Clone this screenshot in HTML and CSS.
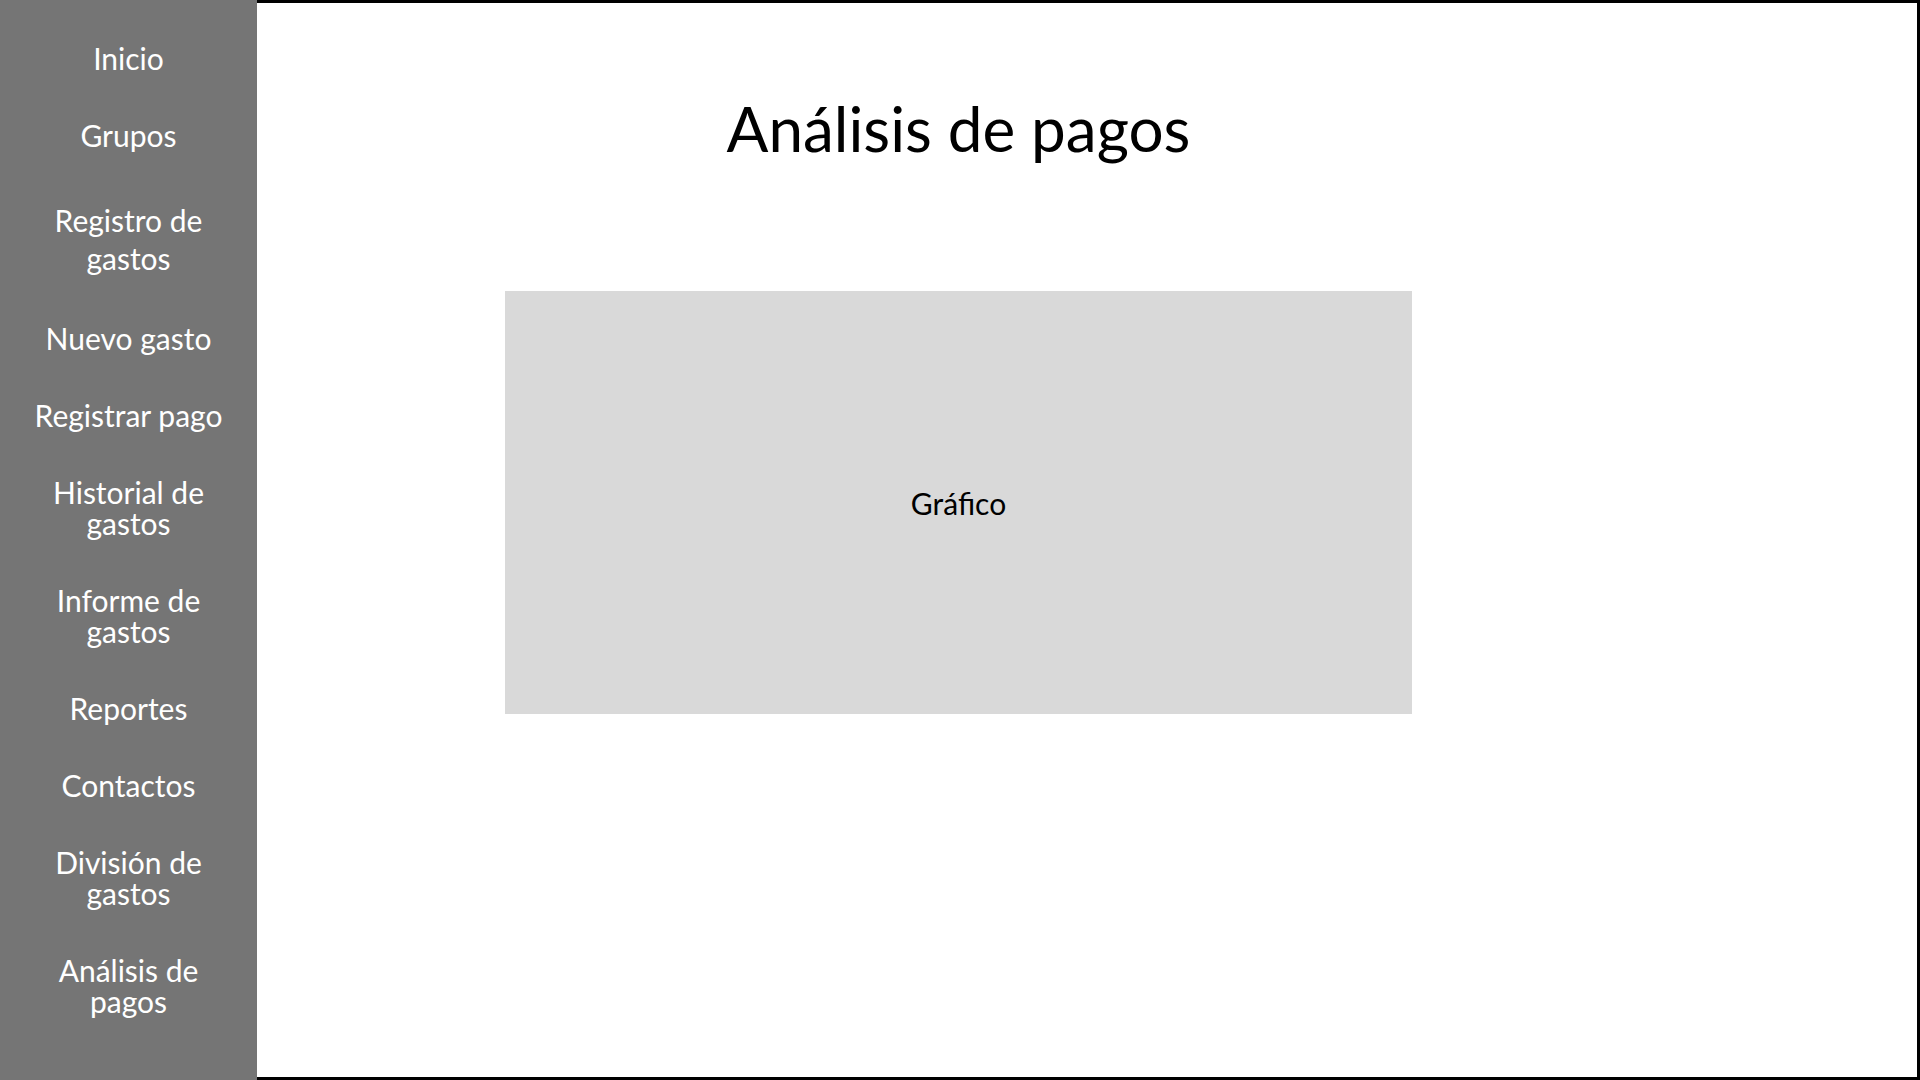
FILE: index.html
```html
<!DOCTYPE html>
<html lang="es">
<head>
    <meta charset="UTF-8">
    <meta name="viewport" content="width=device-width, initial-scale=1.0">
    <title>Análisis de pagos</title>
    <link rel="stylesheet" href="styles.css">
</head>
<body>
    <nav class="sidebar">
        <a href="#">Inicio</a>
        <a href="#">Grupos</a>
        <a href="#" class="tall">Registro de gastos</a>
        <a href="#">Nuevo gasto</a>
        <a href="#">Registrar pago</a>
        <a href="#">Historial de gastos</a>
        <a href="#">Informe de gastos</a>
        <a href="#">Reportes</a>
        <a href="#">Contactos</a>
        <a href="#">División de gastos</a>
        <a href="#">Análisis de pagos</a>
    </nav>
    <main class="content">
        <h1>Análisis de pagos</h1>
        <div class="chart">Gráfico</div>
    </main>
</body>
</html>
```

FILE: styles.css
```css
body {
    margin: 0;
    font-family: Lato, "Open Sans", sans-serif;
    display: flex;
    height: 1080px;
    overflow: hidden;
}
.sidebar {
    width: 257px;
    flex-shrink: 0;
    background-color: #757575;
    display: flex;
    flex-direction: column;
    align-items: center;
    gap: 46px;
    padding-top: 43px;
    box-sizing: border-box;
}
.sidebar a {
    color: white;
    text-decoration: none;
    text-align: center;
    font-size: 30px;
    line-height: 31px;
    width: 215px;
}
.sidebar a.tall {
    line-height: 38px;
    margin-top: 4px;
}
.content {
    flex: 1;
    border: 3px solid black;
    border-left: none;
    display: flex;
    flex-direction: column;
    align-items: center;
    padding-right: 257px;
}
h1 {
    font-weight: normal;
    font-size: 62px;
    margin: 0;
    margin-top: 85px;
    line-height: 80px;
}
.chart {
    width: 907px;
    height: 423px;
    margin-top: 123px;
    background-color: #d9d9d9;
    display: flex;
    align-items: center;
    justify-content: center;
    font-size: 30px;
}
```
